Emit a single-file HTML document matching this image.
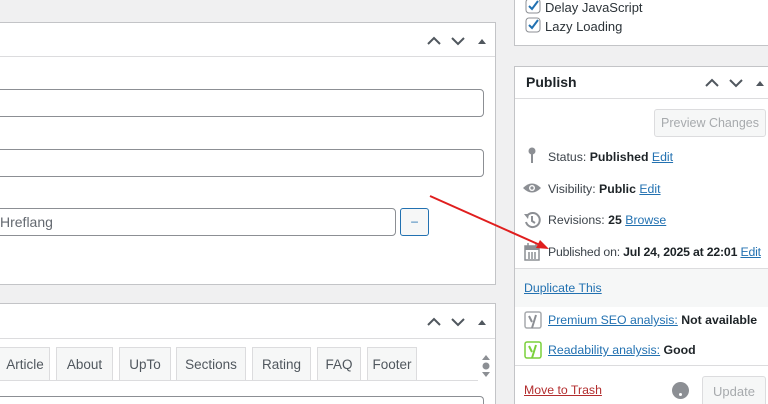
<!DOCTYPE html>
<html style="height:404px;overflow:hidden"><head><style>
body{margin:0;width:768px;height:404px;background:#f0f0f1;font-family:"Liberation Sans",sans-serif;font-size:12.3px;color:#3c434a;position:relative;overflow:hidden}
.a{position:absolute;white-space:nowrap}
.box{position:absolute;background:#fff;border:1px solid #c3c4c7;box-sizing:border-box}
.inp{position:absolute;background:#fff;border:1px solid #8c8f94;border-radius:4px;box-sizing:border-box}
.tab{position:absolute;top:347px;height:34px;background:#f6f7f7;border:1px solid #dcdcde;border-bottom:none;box-sizing:border-box;font-size:13.5px;color:#50575e;line-height:34px;text-align:center;white-space:nowrap}
a{color:#2271b1;text-decoration:underline}
b{color:#1d2327}
</style></head><body>
<div class="box" style="left:-1px;top:22px;width:497px;height:263px"></div>
<div class="a" style="left:0;top:56px;width:495px;height:1px;background:#dcdcde"></div>
<svg class="a" style="left:426px;top:32px" width="70" height="16"><path d="M2 12l6-6 6 6M26 6l6 6 6-6" stroke="#50575e" stroke-width="2" fill="none"/><path d="M52 12l4-5 4 5z" fill="#50575e"/></svg>
<div class="inp" style="left:-5px;top:89px;width:489px;height:28px"></div>
<div class="inp" style="left:-5px;top:149px;width:489px;height:28px"></div>
<div class="inp" style="left:-5px;top:208px;width:401px;height:28px;line-height:26px;padding-left:4px;font-size:14px;color:#646970">Hreflang</div>
<div class="a" style="left:400px;top:208px;width:29px;height:28px;border:1px solid #2271b1;border-radius:3px;box-sizing:border-box;background:#f6f7f7;color:#2271b1;text-align:center;line-height:24px">–</div>
<div class="box" style="left:-1px;top:303px;width:497px;height:101px;border-bottom:none"></div>
<div class="a" style="left:0;top:338px;width:495px;height:1px;background:#dcdcde"></div>
<svg class="a" style="left:426px;top:313px" width="70" height="16"><path d="M2 12l6-6 6 6M26 6l6 6 6-6" stroke="#50575e" stroke-width="2" fill="none"/><path d="M52 12l4-5 4 5z" fill="#50575e"/></svg>
<div class="tab" style="left:-10px;width:60px;padding-left:10px">Article</div>
<div class="tab" style="left:56px;width:57px">About</div>
<div class="tab" style="left:119px;width:52px">UpTo</div>
<div class="tab" style="left:176px;width:70px">Sections</div>
<div class="tab" style="left:252px;width:59px">Rating</div>
<div class="tab" style="left:317px;width:44px">FAQ</div>
<div class="tab" style="left:367px;width:50px">Footer</div>
<div class="a" style="left:0;top:380px;width:478px;height:1px;background:#dcdcde"></div>
<svg class="a" style="left:480px;top:352px" width="12" height="28"><path d="M2 8l4-5 4 5z M2 20l4 5 4-5z" fill="#8c8f94"/><circle cx="6" cy="14" r="3.5" fill="#8c8f94"/></svg>
<div class="inp" style="left:-5px;top:396px;width:489px;height:8px;border-bottom:none;border-radius:4px 4px 0 0"></div>
<div class="box" style="left:514px;top:-5px;width:260px;height:51px"></div>
<svg class="a" style="left:525px;top:0" width="16" height="34"><rect x="1" y="-1" width="14" height="14" rx="3" fill="#fff" stroke="#8c8f94"/><path d="M4 6l3 3 6-8" stroke="#2271b1" stroke-width="2" fill="none"/><rect x="1" y="18" width="14" height="14" rx="3" fill="#fff" stroke="#8c8f94"/><path d="M4 25l3 3 6-8" stroke="#2271b1" stroke-width="2" fill="none"/></svg>
<div class="a" style="left:545px;top:0;font-size:13px;color:#2c3338">Delay JavaScript</div>
<div class="a" style="left:545px;top:19px;font-size:13px;color:#2c3338">Lazy Loading</div>
<div class="box" style="left:514px;top:66px;width:260px;height:338px;border-bottom:none"></div>
<div class="a" style="left:526px;top:74px;font-size:14px;font-weight:bold;color:#1d2327">Publish</div>
<svg class="a" style="left:704px;top:74px" width="70" height="16"><path d="M2 12l6-6 6 6M26 6l6 6 6-6" stroke="#50575e" stroke-width="2" fill="none"/><path d="M52 12l4-5 4 5z" fill="#50575e"/></svg>
<div class="a" style="left:515px;top:98px;width:253px;height:1px;background:#dcdcde"></div>
<div class="a" style="left:654px;top:109px;width:112px;height:28px;border:1px solid #dcdcde;border-radius:3px;box-sizing:border-box;background:#f6f7f7;color:#a7aaad;text-align:center;line-height:26px;font-size:12.5px">Preview Changes</div>
<svg class="a" style="left:526px;top:146px" width="16" height="20"><circle cx="6" cy="5" r="3.5" fill="#8c8f94"/><rect x="5" y="7" width="2" height="10" fill="#8c8f94"/></svg>
<div class="a" style="left:548px;top:150px">Status: <b>Published</b> <a>Edit</a></div>
<svg class="a" style="left:522px;top:181px" width="20" height="14"><path d="M1 7q9-9 18 0q-9 9-18 0z" fill="#8c8f94"/><circle cx="10" cy="7" r="3" fill="#fff"/><circle cx="10" cy="7" r="1.6" fill="#8c8f94"/></svg>
<div class="a" style="left:548px;top:182px">Visibility: <b>Public</b> <a>Edit</a></div>
<svg class="a" style="left:523px;top:211px" width="18" height="18"><path d="M4 5a7 7 0 1 1-1 6" stroke="#8c8f94" stroke-width="2" fill="none"/><path d="M1 3l5 0-1 5z" fill="#8c8f94"/><path d="M9 5v5l3 2" stroke="#8c8f94" stroke-width="2" fill="none"/></svg>
<div class="a" style="left:548px;top:213px">Revisions: <b>25</b> <a>Browse</a></div>
<svg class="a" style="left:524px;top:243px" width="16" height="18"><rect x="1" y="3" width="14" height="14" fill="none" stroke="#8c8f94" stroke-width="1.5"/><rect x="1" y="3" width="14" height="4" fill="#8c8f94"/><path d="M4 0v4M12 0v4M5 9v7M8 9v7M11 9v7" stroke="#8c8f94" stroke-width="1.5"/></svg>
<div class="a" style="left:548px;top:245px;letter-spacing:-0.2px">Published on: <b>Jul 24, 2025 at 22:01</b> <a>Edit</a></div>
<div class="a" style="left:515px;top:268px;width:253px;height:38px;background:#f6f7f7;border-top:1px solid #dcdcde"></div>
<div class="a" style="left:524px;top:281px"><a>Duplicate This</a></div>
<svg class="a" style="left:524px;top:310px" width="18" height="20"><rect x="1" y="2" width="16" height="16" rx="2" fill="none" stroke="#a7aaad" stroke-width="1.5"/><path d="M5 6l3 6M12 5l-4 13" stroke="#8c8f94" stroke-width="2" fill="none"/></svg>
<div class="a" style="left:548px;top:313px"><a>Premium SEO analysis:</a> <b>Not available</b></div>
<svg class="a" style="left:524px;top:340px" width="18" height="20"><rect x="1" y="2" width="16" height="16" rx="2" fill="none" stroke="#7ad03a" stroke-width="1.5"/><path d="M5 6l3 6M12 5l-4 13" stroke="#7ad03a" stroke-width="2" fill="none"/></svg>
<div class="a" style="left:548px;top:343px"><a>Readability analysis:</a> <b>Good</b></div>
<div class="a" style="left:515px;top:365px;width:253px;height:1px;background:#dcdcde"></div>
<div class="a" style="left:524px;top:383px"><a style="color:#b32d2e">Move to Trash</a></div>
<div class="a" style="left:672px;top:382px;width:17px;height:17px;border-radius:50%;background:#8c8f94"></div>
<div class="a" style="left:679px;top:393px;width:3px;height:3px;border-radius:50%;background:#fff"></div>
<div class="a" style="left:702px;top:376px;width:64px;height:28px;border:1px solid #dcdcde;border-bottom:none;border-radius:3px 3px 0 0;box-sizing:border-box;background:#f6f7f7;color:#a7aaad;text-align:center;line-height:30px;font-size:13px">Update</div>
<svg class="a" style="left:0;top:0" width="768" height="404"><line x1="430" y1="196" x2="540" y2="245" stroke="#e01e1e" stroke-width="2"/><path d="M549 249l-13-1 4-8z" fill="#e01e1e"/></svg>
</body></html>
